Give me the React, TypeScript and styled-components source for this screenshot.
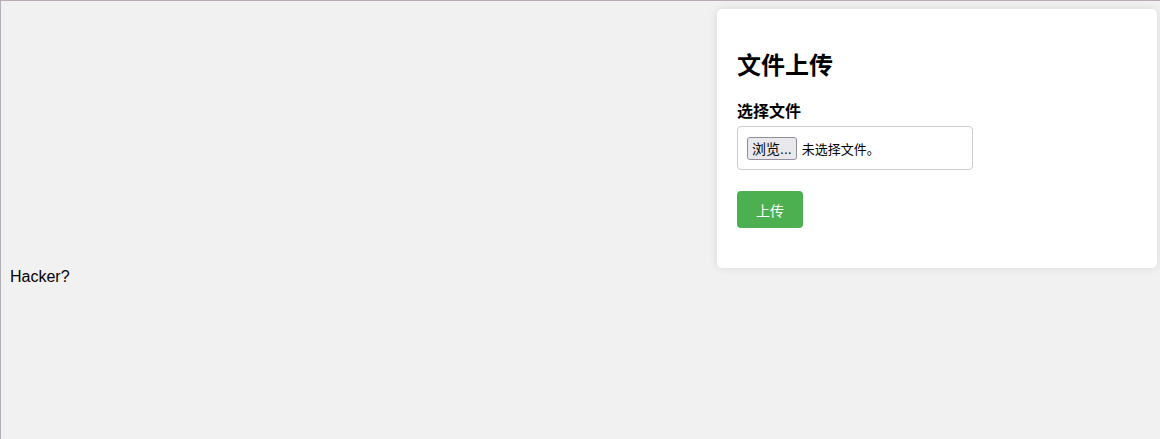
import React from 'react';
import styled, { createGlobalStyle } from 'styled-components';

const GlobalStyle = createGlobalStyle`
    html, body {
        margin: 0;
        padding: 0;
        background: #f1f1f1;
    }
    body {
        font-family: "Liberation Sans", Arial, "Noto Sans CJK SC", sans-serif;
        color: #000;
    }
`;

const Page = styled.div`
    box-sizing: border-box;
    min-height: 439px;
    width: 1160px;
    border-top: 1px solid #b7acb5;
    border-left: 1px solid #b3b0ba;
    padding: 8px 3px 0 8px;
    display: flex;
    flex-direction: column;
`;

const Card = styled.div`
    box-sizing: border-box;
    align-self: flex-end;
    width: 440px;
    background: #fff;
    border-radius: 5px;
    box-shadow: 0 0 10px rgba(0, 0, 0, 0.1);
    padding: 20px;
`;

const Title = styled.h2`
    margin: 20px 0 17px;
    font-size: 24px;
    line-height: 34px;
    font-weight: bold;
`;

const FieldLabel = styled.label`
    display: block;
    font-size: 16px;
    line-height: 23px;
    font-weight: bold;
    margin-bottom: 3px;
`;

const FileBox = styled.div`
    box-sizing: border-box;
    width: 236px;
    height: 44px;
    border: 1px solid #ccc;
    border-radius: 4px;
    padding: 0 9px;
    display: flex;
    align-items: center;
    gap: 5px;
    font-size: 14px;
`;

const BrowseButton = styled.span`
    box-sizing: border-box;
    height: 23px;
    padding: 0 4px;
    display: inline-flex;
    align-items: center;
    background: #e9e9ed;
    border: 1px solid #8f8f9d;
    border-radius: 3px;
    font-size: 14px;
    color: #000;
`;

const FileStatus = styled.span`
    font-size: 13px;
`;

const SubmitButton = styled.button`
    box-sizing: border-box;
    margin: 21px 0 20px;
    width: 66px;
    height: 37px;
    border: none;
    border-radius: 4px;
    background: #4caf50;
    color: #fff;
    font-family: inherit;
    font-size: 14px;
    cursor: pointer;
    display: block;
`;

const Message = styled.div`
    font-size: 16px;
    line-height: 18px;
    padding-left: 1px;
`;

export default function App() {
    return (
        <>
            <GlobalStyle />
            <Page>
                <Card>
                    <Title>文件上传</Title>
                    <FieldLabel>选择文件</FieldLabel>
                    <FileBox>
                        <BrowseButton>浏览...</BrowseButton>
                        <FileStatus>未选择文件。</FileStatus>
                    </FileBox>
                    <SubmitButton>上传</SubmitButton>
                </Card>
                <Message>Hacker?</Message>
            </Page>
        </>
    );
}
